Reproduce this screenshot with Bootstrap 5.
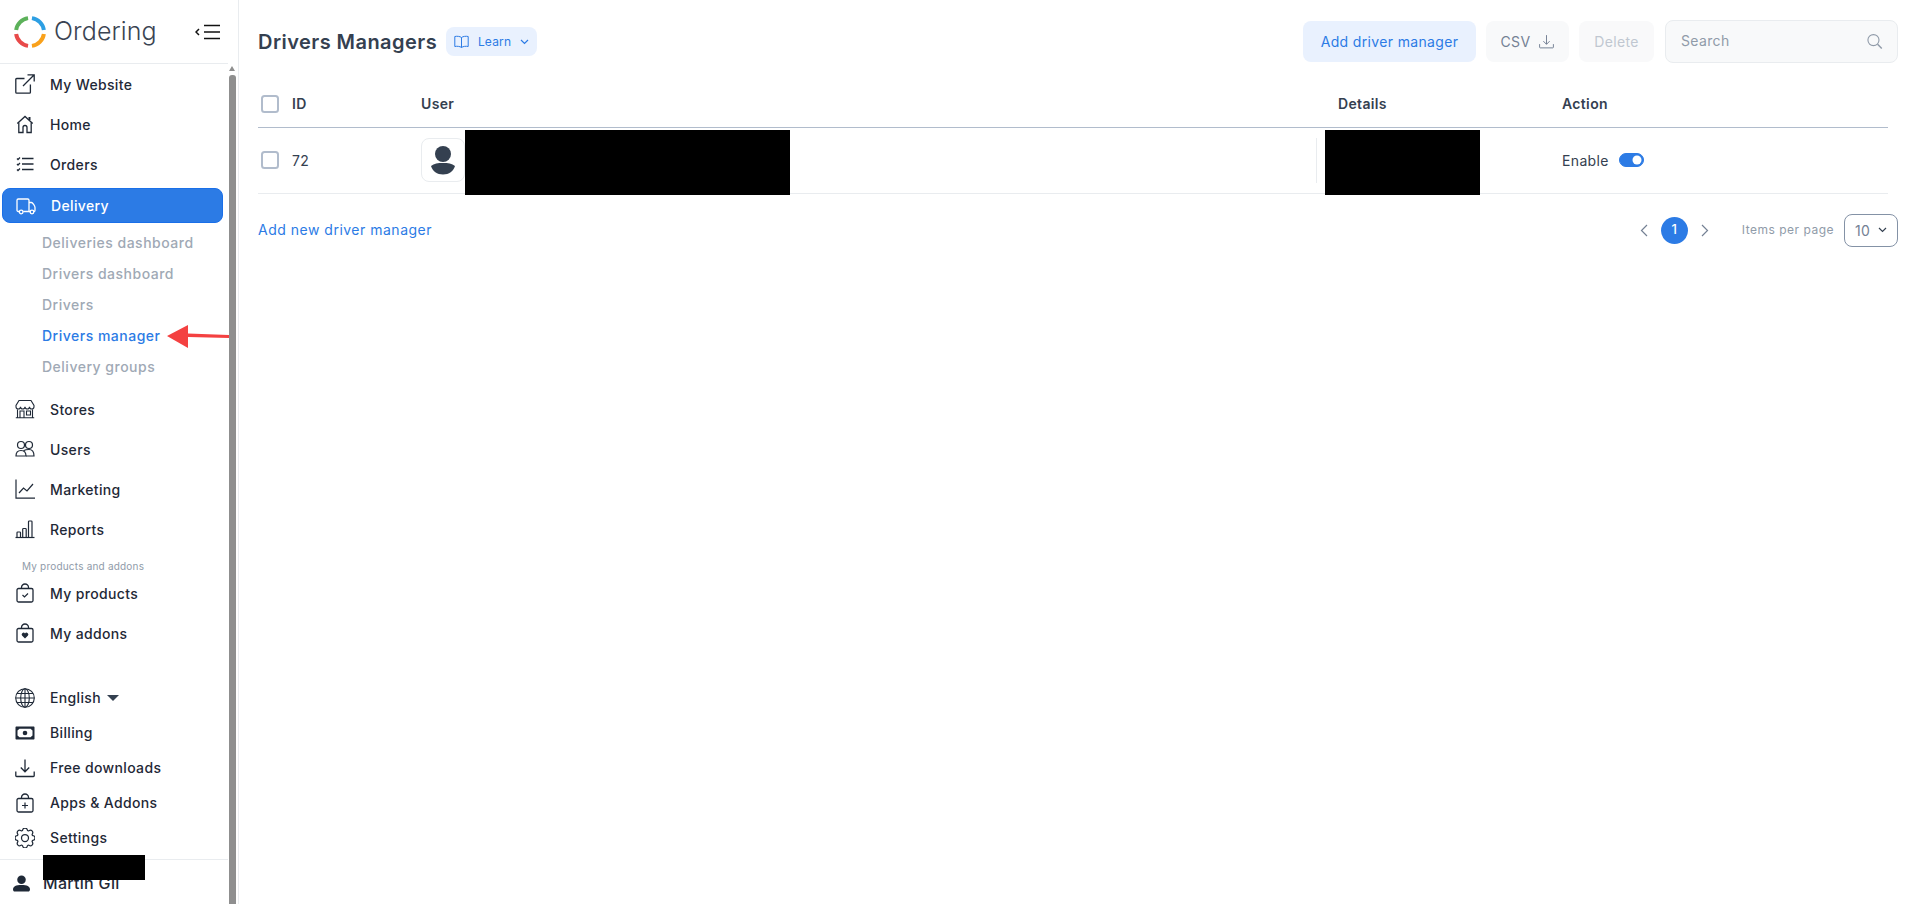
<!DOCTYPE html>
<html lang="en">
<head>
  <meta charset="UTF-8" />
  <title>Drivers Managers</title>
  <link href="https://cdn.jsdelivr.net/npm/bootstrap@5.3.3/dist/css/bootstrap.min.css" rel="stylesheet" />
  <style>
    html, body { height: 100%; overflow: hidden; }
    body {
      font-family: "Inter", "Liberation Sans", sans-serif;
      font-size: 14px;
      color: #344050;
      letter-spacing: .35px;
      background: #fff;
    }
    .shell { height: 904px; position: relative; }
    .side { width: 239px; border-right: 1px solid #e9ecef; flex: none; height: 904px; }
    .side-inner { width: 228px; flex: none; }
    .side-head { height: 64px; border-bottom: 1px solid #e9ecef; padding-left: 14px; padding-right: 7px; }
    .logo-word { font-size: 25px; font-weight: 300; color: #3a4452; letter-spacing: .1px; margin-left: 8px; line-height: 1; }
    .rail { width: 8px; margin-left: 1px; padding-top: 66px; flex: none; }
    .rail-up { width: 0; height: 0; border-left: 3.5px solid transparent; border-right: 3.5px solid transparent; border-bottom: 5px solid #8f8f8f; margin-bottom: 4px; }
    .rail-thumb { width: 7px; flex: 1; background: #8f8f8f; border-radius: 3px 3px 0 0; }
    .menu-row { height: 40px; padding-left: 15px; color: #1f2937; font-weight: 500; text-decoration: none; gap: 15px; }
    .menu-row svg, .foot-row svg { width: 20px; height: 20px; flex: none; }
    .menu-on { height: 35px; margin: 4px 5px 1px 2px; padding-left: 13px; background: #2c7be5; color: #fff; border-radius: 8px; border: 1px solid #1a6fe8; }
    .sub-list { padding-top: 2.5px; margin-bottom: 7.5px; }
    .sub-row { height: 31px; padding-left: 42px; color: #a0a9b5; font-weight: 500; text-decoration: none; letter-spacing: .5px; }
    .sub-on { color: #2c7be5; }
    .menu-label { height: 24px; padding: 9px 0 0 22px; font-size: 10px; line-height: 16px; color: #909ba9; letter-spacing: .2px; }
    .foot-list { margin-top: 27px; }
    .foot-row { height: 35px; padding-left: 15px; gap: 15px; color: #1f2937; font-weight: 500; text-decoration: none; }
    .caret { width: 0; height: 0; border-left: 6px solid transparent; border-right: 6px solid transparent; border-top: 6px solid #344050; margin-left: -9px; }
    .user-row { border-top: 1px solid #e9ecef; margin-top: 4px; height: 44px; padding: 3px 0 0 13px; gap: 13px; position: relative; font-weight: 500; font-size: 16px; letter-spacing: .3px; color: #1f2937; }
    .user-row svg { width: 17px; height: 17px; }
    .blackout { position: absolute; background: #000; }
    .blackout-user { left: 43px; top: -5px; width: 102px; height: 25px; }
    .page { padding: 20px 19px 0 19px; min-width: 0; }
    .page-title { font-size: 20px; font-weight: 600; color: #344050; margin: 0; letter-spacing: .45px; }
    .learn-btn { background: #e9f1fe; color: #2c7be5; border: 0; border-radius: 8px; height: 29px; width: 91px; margin-left: 9px; font-size: 12px; gap: 9px; padding: 0; letter-spacing: .2px; }
    .top-actions { gap: 10px; }
    .top-btn { height: 41px; border-radius: 8px; border: 0; font-size: 14px; letter-spacing: .35px; padding: 0; }
    .btn-add { width: 173px; background: #e9f1fe; color: #2c7be5; }
    .btn-csv { width: 83px; background: #f8f9fa; color: #748194; gap: 9px; }
    .btn-del { width: 75px; background: #f8f9fa; color: #b6bec9; opacity: .85; }
    .search-box { width: 233px; height: 43px; margin-left: 1px; background: #f8f9fa; border: 1px solid #e9ecef; border-radius: 8px; padding: 0 14px 0 15px; }
    .search-input { border: 0; background: transparent; padding: 0 0 2px; font-size: 14px; color: #909ba9; box-shadow: none; letter-spacing: .35px; }
    .search-input::placeholder { color: #909ba9; }
    .table-wrap { margin: 18px 10px 0 0; }
    .drivers { table-layout: fixed; width: 1630px; margin: 0; color: #344050; }
    .drivers th { height: 46px; padding: 0; font-weight: 600; vertical-align: middle; border-bottom: 1px solid #b1bccc; font-size: 14px; color: #344050; }
    .drivers td { height: 66px; padding: 0; vertical-align: middle; border-bottom: 1px solid #e9ecef; position: relative; font-weight: 400; }
    .row-check { width: 18px; height: 18px; margin: 0 0 0 3px; border: 2px solid #b1bccc; border-radius: 2px; display: block; }
    .avatar-box { width: 44px; height: 44px; border: 1px solid #e9ecef; border-radius: 8px; }
    .blackout-name { left: 44px; top: 2px; width: 325px; height: 65px; z-index: 2; }
    .blackout-detail { left: -13px; top: 2px; width: 155px; height: 65px; z-index: 2; }
    .cell-divide { width: 1px; height: 45px; background: #e9ecef; margin-right: 21px; }
    .enable-switch { margin: 0; padding: 0; min-height: 0; }
    .enable-switch .form-check-input { width: 25px; height: 14px; margin: 0 0 0 10px; float: none; display: block; background-color: #2c7be5; border-color: #2c7be5; }
    .foot-bar { margin-top: 20px; height: 33px; }
    .add-link { color: #2c7be5; text-decoration: none; letter-spacing: .5px; margin-bottom: 2px; }
    .pager-dot { width: 27px; height: 27px; border-radius: 50%; background: #2c7be5; color: #fff; font-size: 13px; font-weight: 500; margin: 0 13px; }
    .per-label { font-size: 12px; color: #909ba9; margin: 0 10px 0 33px; letter-spacing: .5px; }
    .per-select { width: 54px; height: 33px; border: 1px solid #8492a6; border-radius: 8px; color: #748194; font-size: 14px; padding-left: 10px; gap: 8px; }
    .red-arrow { position: absolute; left: 165px; top: 322px; width: 66px; height: 28px; }
  </style>
</head>
<body>
  <svg width="0" height="0" class="position-absolute">
    <defs>
      <g id="i-ext" fill="none" stroke="currentColor" stroke-width="1.3"><path d="M9.5 4.5H1.7a.9.9 0 0 0-.9.9v12.9c0 .5.4.9.9.9h12.8c.5 0 .9-.4.9-.9V10.500"/><path d="M8 12L19 1M12.500 .8h6.700v6.700"/></g>
      <g id="i-home" fill="none" stroke="currentColor" stroke-width="1.300"><path d="M2.300 9.500L10 2.500l7.700 7"/><path d="M3.800 8.500v10h4.200v-5a2 2 0 0 1 4 0v5h4.200v-10"/><path d="M14.500 3v3" stroke-width="2"/></g>
      <g id="i-list" fill="none" stroke="currentColor" stroke-width="1.300"><path d="M7 4.500h11.500M7 10h11.500M7 15.500h11.500"/><path d="M2 4.500l1 1 2-2M2 10l1 1 2-2M2 15.500l1 1 2-2"/></g>
      <g id="i-truck" fill="none" stroke="currentColor" stroke-width="1.300"><path d="M3.200 15.500H2.300a1.300 1.300 0 0 1-1.300-1.300V4.300C1 3.600 1.600 3 2.300 3h9.400c.7 0 1.300.6 1.300 1.300v11.200H7.200"/><path d="M13 6.500h2.500c1 0 3.500 3.500 3.500 5v2.700c0 .7-.5 1.300-1.200 1.300M14 15.500h-1"/><circle cx="5.200" cy="16" r="1.800"/><circle cx="16" cy="16" r="1.800"/></g>
      <g id="i-store" fill="none" stroke="currentColor" stroke-width="1.100"><path d="M4 1.500h12l3 5v1.300a2.250 2.250 0 0 1-4.500 0 2.250 2.250 0 0 1-4.500 0 2.250 2.250 0 0 1-4.500 0 2.250 2.250 0 0 1-4.500 0V6.500z"/><path d="M2.500 10.500v8M17.500 10.500v8M.8 18.800h18.400M5 18.500v-6.500h4v6.500M11.500 12h4v4h-4z"/></g>
      <g id="i-users" fill="none" stroke="currentColor" stroke-width="1.200"><circle cx="6" cy="6" r="3.500"/><circle cx="14" cy="6" r="3.500"/><path d="M1 17c0-3.500 2-5.500 5-5.500s5 2 5 5.500z"/><path d="M8.500 11.800c1.200-.8 3-1.300 5.500-1.300 3 0 5 2.500 5 6.500h-8"/></g>
      <g id="i-chart" fill="none" stroke="currentColor" stroke-width="1.200"><path d="M1 .5v18.700h19"/><path d="M4 14l4.500-5 3.500 3 6-7"/></g>
      <g id="i-bars" fill="none" stroke="currentColor" stroke-width="1.200"><path d="M.5 18.500h19"/><rect x="2" y="13" width="3.500" height="5.500" rx=".8"/><rect x="7.700" y="9.500" width="3.500" height="9" rx=".8"/><rect x="13.500" y="2" width="3.500" height="16.500" rx=".8"/></g>
      <g id="i-bag" fill="none" stroke="currentColor" stroke-width="1.300"><rect x="2" y="5.500" width="16" height="13.500" rx="1.500"/><path d="M6.500 5.500V4.500a3.500 3.500 0 0 1 7 0v1"/></g>
      <g id="i-globe" fill="none" stroke="currentColor" stroke-width="1.100"><circle cx="10" cy="10" r="9.300"/><ellipse cx="10" cy="10" rx="4.300" ry="9.300"/><path d="M10 .7v18.600M.7 10h18.600M2 5.500h16M2 14.500h16"/></g>
      <g id="i-cash"><path fill="currentColor" fill-rule="evenodd" d="M1.500 3.500h17c.6 0 1 .4 1 1v11c0 .6-.4 1-1 1h-17c-.6 0-1-.4-1-1v-11c0-.6.400-1 1-1zm3 2.200L2.500 7.500v5l2 1.800h11l2-1.800v-5l-2-1.800z"/><circle cx="10" cy="10" r="2.300" fill="currentColor"/></g>
      <g id="i-down" fill="none" stroke="currentColor" stroke-width="1.300"><path d="M10 1.500v12M5.800 9.500l4.200 4.300 4.200-4.300"/><path d="M.8 13.500v4.200c0 .5.400.8.800.8h16.800c.4 0 .8-.3.800-.8v-4.200"/></g>
      <g id="i-gear" fill="none" stroke="currentColor" stroke-width="1" transform="scale(1.250)"><circle cx="8" cy="8" r="2.800"/><path d="M9.796 1.343c-.527-1.790-3.065-1.790-3.592 0l-.094.319a.873.873 0 0 1-1.255.520l-.292-.160c-1.640-.892-3.433.902-2.540 2.541l.159.292a.873.873 0 0 1-.520 1.255l-.319.094c-1.790.527-1.790 3.065 0 3.592l.319.094a.873.873 0 0 1 .520 1.255l-.160.292c-.892 1.640.901 3.434 2.541 2.540l.292-.159a.873.873 0 0 1 1.255.520l.094.319c.527 1.790 3.065 1.790 3.592 0l.094-.319a.873.873 0 0 1 1.255-.520l.292.160c1.640.893 3.434-.902 2.540-2.541l-.159-.292a.873.873 0 0 1 .520-1.255l.319-.094c1.790-.527 1.790-3.065 0-3.592l-.319-.094a.873.873 0 0 1-.520-1.255l.160-.292c.893-1.640-.902-3.433-2.541-2.540l-.292.159a.873.873 0 0 1-1.255-.520z"/></g>
      <g id="i-person" fill="currentColor"><circle cx="10" cy="5.500" r="5"/><path d="M0 17c0-3.500 3.500-5.200 10-5.200S20 13.500 20 17c0 1.500-1 2.500-2 2.500H2c-1 0-2-1-2-2.500z"/></g>
    </defs>
  </svg>

  <div class="shell d-flex">
    <aside class="side d-flex">
      <div class="side-inner d-flex flex-column">
        <div class="side-head d-flex align-items-center">
          <svg width="32" height="32" viewBox="0 0 32 32" fill="none" stroke-width="4">
            <path stroke="#5cb15a" d="M2.140 14.050A14 14 0 0 1 14.050 2.140"/>
            <path stroke="#2d9fe3" d="M17.950 2.140A14 14 0 0 1 29.860 14.050"/>
            <path stroke="#f9a11b" d="M29.860 17.950A14 14 0 0 1 17.950 29.860"/>
            <path stroke="#e84a4a" d="M14.050 29.860A14 14 0 0 1 2.140 17.950"/>
          </svg>
          <span class="logo-word">Ordering</span>
          <svg class="ms-auto" width="26" height="16" viewBox="0 0 26 16" fill="none" stroke="#111" stroke-width="1.300"><path d="M4 5L1 8l3 3" stroke-width="1.500"/><path d="M9 1.500h16M9 8h16M9 14.500h16"/></svg>
        </div>
        <nav class="d-flex flex-column">
          <a class="menu-row d-flex align-items-center" href="#"><svg viewBox="0 0 20 20"><use href="#i-ext"/></svg>My Website</a>
          <a class="menu-row d-flex align-items-center" href="#"><svg viewBox="0 0 20 20"><use href="#i-home"/></svg>Home</a>
          <a class="menu-row d-flex align-items-center" href="#"><svg viewBox="0 0 20 20"><use href="#i-list"/></svg>Orders</a>
          <a class="menu-row menu-on d-flex align-items-center" href="#"><svg viewBox="0 0 20 20"><use href="#i-truck"/></svg>Delivery</a>
          <div class="sub-list d-flex flex-column">
            <a class="sub-row d-flex align-items-center" href="#">Deliveries dashboard</a>
            <a class="sub-row d-flex align-items-center" href="#">Drivers dashboard</a>
            <a class="sub-row d-flex align-items-center" href="#">Drivers</a>
            <a class="sub-row sub-on d-flex align-items-center" href="#">Drivers manager</a>
            <a class="sub-row d-flex align-items-center" href="#">Delivery groups</a>
          </div>
          <a class="menu-row d-flex align-items-center" href="#"><svg viewBox="0 0 20 20"><use href="#i-store"/></svg>Stores</a>
          <a class="menu-row d-flex align-items-center" href="#"><svg viewBox="0 0 20 20"><use href="#i-users"/></svg>Users</a>
          <a class="menu-row d-flex align-items-center" href="#"><svg viewBox="0 0 20 20"><use href="#i-chart"/></svg>Marketing</a>
          <a class="menu-row d-flex align-items-center" href="#"><svg viewBox="0 0 20 20"><use href="#i-bars"/></svg>Reports</a>
          <div class="menu-label">My products and addons</div>
          <a class="menu-row d-flex align-items-center" href="#"><svg viewBox="0 0 20 20"><use href="#i-bag"/><path d="M7.500 12l2 2 3.500-3.500" fill="none" stroke="currentColor" stroke-width="1.200"/></svg>My products</a>
          <a class="menu-row d-flex align-items-center" href="#"><svg viewBox="0 0 20 20"><use href="#i-bag"/><path d="M10 15.500l-3-3a1.800 1.800 0 0 1 3-2 1.800 1.800 0 0 1 3 2z" fill="currentColor"/></svg>My addons</a>
        </nav>
        <div class="foot-list d-flex flex-column">
          <a class="foot-row d-flex align-items-center" href="#"><svg viewBox="0 0 20 20"><use href="#i-globe"/></svg>English<span class="caret"></span></a>
          <a class="foot-row d-flex align-items-center" href="#"><svg viewBox="0 0 20 20"><use href="#i-cash"/></svg>Billing</a>
          <a class="foot-row d-flex align-items-center" href="#"><svg viewBox="0 0 20 20"><use href="#i-down"/></svg>Free downloads</a>
          <a class="foot-row d-flex align-items-center" href="#"><svg viewBox="0 0 20 20"><use href="#i-bag"/><path d="M10 9.500v6M7 12.500h6" fill="none" stroke="currentColor" stroke-width="1.200"/></svg>Apps &amp; Addons</a>
          <a class="foot-row d-flex align-items-center" href="#"><svg viewBox="0 0 20 20"><use href="#i-gear"/></svg>Settings</a>
        </div>
        <div class="user-row d-flex align-items-center">
          <svg viewBox="0 0 20 20"><use href="#i-person"/></svg>Martin Gil
          <div class="blackout blackout-user"></div>
        </div>
      </div>
      <div class="rail d-flex flex-column">
        <div class="rail-up"></div>
        <div class="rail-thumb"></div>
      </div>
    </aside>

    <main class="page flex-grow-1">
      <div class="d-flex align-items-center">
        <h1 class="page-title">Drivers Managers</h1>
        <button class="learn-btn btn d-flex align-items-center justify-content-center" type="button">
          <svg width="15" height="13" viewBox="0 0 15 13" fill="none" stroke="currentColor" stroke-width="1"><path d="M7.500 2.500C6 1.300 3 1 .8 1.500v10c2.200-.5 5.200-.2 6.700 1 1.500-1.200 4.500-1.500 6.700-1v-10c-2.200-.5-5.200-.2-6.700 1zM7.500 2.500v10"/></svg>
          <span>Learn</span>
          <svg width="9" height="6" viewBox="0 0 9 6" fill="none" stroke="currentColor" stroke-width="1.200"><path d="M1 1l3.500 3.500L8 1"/></svg>
        </button>
        <div class="top-actions ms-auto d-flex align-items-center">
          <button class="top-btn btn-add btn" type="button">Add driver manager</button>
          <button class="top-btn btn-csv btn d-flex align-items-center justify-content-center" type="button">CSV
            <svg width="15" height="15" viewBox="0 0 20 20"><use href="#i-down"/></svg>
          </button>
          <button class="top-btn btn-del btn" type="button">Delete</button>
          <div class="search-box d-flex align-items-center">
            <input class="search-input form-control" type="text" placeholder="Search" />
            <svg width="17" height="17" viewBox="0 0 17 17" fill="none" stroke="#909ba9" stroke-width="1.200"><circle cx="7" cy="7" r="6"/><path d="M11.500 11.500l4.500 4.500" stroke-width="1.600"/></svg>
          </div>
        </div>
      </div>

      <div class="table-wrap">
        <table class="drivers table">
          <colgroup>
            <col style="width:34px" /><col style="width:129px" /><col style="width:917px" /><col style="width:224px" /><col style="width:326px" />
          </colgroup>
          <thead>
            <tr>
              <th><input class="form-check-input row-check" type="checkbox" /></th>
              <th>ID</th>
              <th>User</th>
              <th>Details</th>
              <th>Action</th>
            </tr>
          </thead>
          <tbody>
            <tr>
              <td><input class="form-check-input row-check" type="checkbox" /></td>
              <td>72</td>
              <td>
                <div class="d-flex align-items-center justify-content-between">
                  <div class="avatar-box d-flex align-items-center justify-content-center">
                    <svg width="26" height="30" viewBox="0 0 26 30" fill="#344050"><circle cx="13" cy="9" r="8"/><path d="M1 21c3-2.500 7-3 12-3s9 .5 12 3c-1.500 5-6 8.500-12 8.500S2.500 26 1 21z"/></svg>
                  </div>
                  <div class="cell-divide"></div>
                </div>
                <div class="blackout blackout-name"></div>
              </td>
              <td><div class="blackout blackout-detail"></div></td>
              <td>
                <div class="d-flex align-items-center">
                  <span>Enable</span>
                  <div class="form-check form-switch enable-switch"><input class="form-check-input" type="checkbox" checked /></div>
                </div>
              </td>
            </tr>
          </tbody>
        </table>
      </div>

      <div class="foot-bar d-flex align-items-center">
        <a class="add-link" href="#">Add new driver manager</a>
        <div class="ms-auto d-flex align-items-center">
          <svg width="8" height="13" viewBox="0 0 8 13" fill="none" stroke="#748194" stroke-width="1.200"><path d="M7 1L1.500 6.500 7 12"/></svg>
          <span class="pager-dot d-flex align-items-center justify-content-center">1</span>
          <svg width="8" height="13" viewBox="0 0 8 13" fill="none" stroke="#748194" stroke-width="1.200"><path d="M1 1l5.500 5.500L1 12"/></svg>
          <span class="per-label">Items per page</span>
          <div class="per-select d-flex align-items-center"><span>10</span>
            <svg width="9" height="6" viewBox="0 0 9 6" fill="none" stroke="#344050" stroke-width="1.200"><path d="M1 1l3.500 3.500L8 1"/></svg>
          </div>
        </div>
      </div>
    </main>

    <svg class="red-arrow" viewBox="0 0 66 28" fill="#f44141"><path d="M2 14L23 3v8.500l41 1.500v3l-41-1v11z"/></svg>
  </div>

  <script src="https://cdn.jsdelivr.net/npm/bootstrap@5.3.3/dist/js/bootstrap.bundle.min.js"></script>
</body>
</html>
